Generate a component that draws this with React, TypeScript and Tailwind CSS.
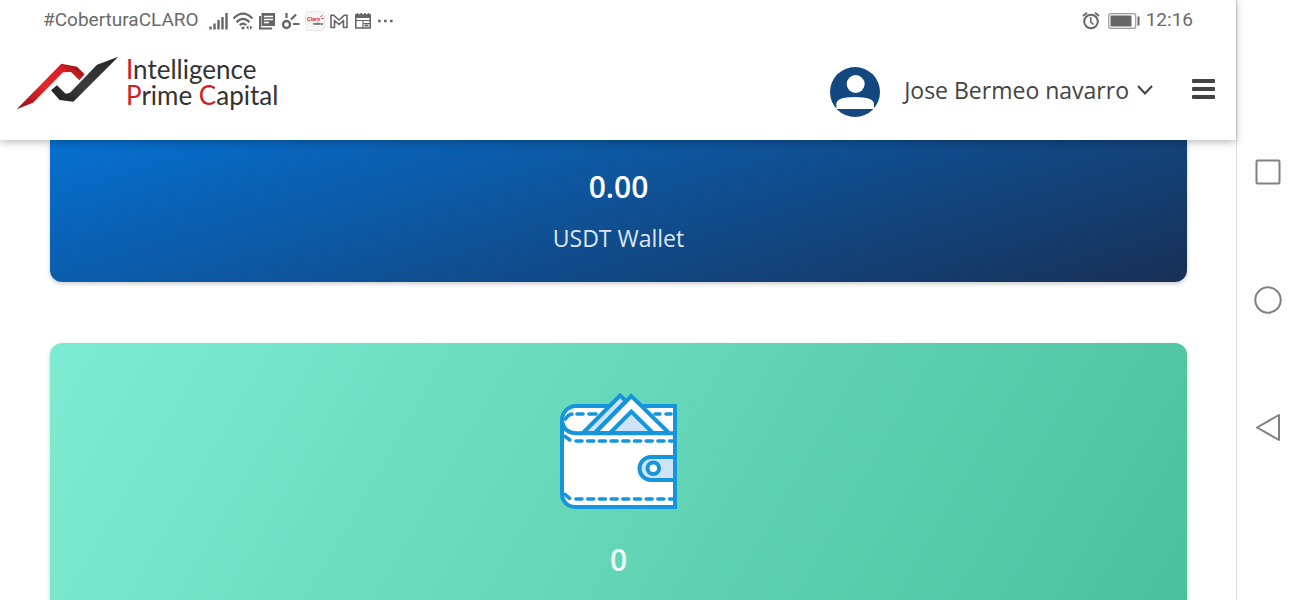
import type { ReactNode } from "react";

function StatusIcon({ children }: { children: ReactNode }) {
  return (
    <svg viewBox="0 0 20 20" className="size-5" fill="none" stroke="#666" strokeWidth="2" aria-hidden="true">
      {children}
    </svg>
  );
}

function StatusBar() {
  return (
    <div className="flex h-10 items-center justify-between pl-[43px] pr-[43px] pt-px font-['Roboto',sans-serif] text-[19px] text-[#6a6a6a]">
      <div className="flex items-center">
        <span>#CoberturaCLARO</span>
        <div className="ml-2.5 flex items-center gap-1">
          <StatusIcon>
            <path d="M1.500 15.500v3M5.500 12.500v6M9.500 9v9.500M13.500 6v12.500M17.500 2v16.500" strokeWidth="2.400" />
          </StatusIcon>
          <StatusIcon>
            <path d="M.5 7.500Q10-2 19.500 7.500M3.500 11.200Q10 4.500 16.500 11.200M6.800 14.300Q10 11 13.200 14.300" strokeWidth="2.200" />
            <circle cx="10" cy="17" r="1.600" fill="#666" stroke="none" />
            <path d="M15.500 14.500v4L13 16.500zM17 14.500v4l2.500-2z" fill="#666" stroke="none" />
          </StatusIcon>
          <StatusIcon>
            <path d="M3 5v12.500h12" />
            <path d="M4.500 2h13.500v13H4.500z" fill="#666" stroke="none" />
            <path d="M7 5.500h9M7 8.500h9M7 11.500h5" stroke="#fff" strokeWidth="1.400" />
          </StatusIcon>
          <StatusIcon>
            <circle cx="5.500" cy="13.500" r="3.500" strokeWidth="2.400" />
            <path d="M5.500 2v5M10 8.500l5-5M12 13h6.500" strokeWidth="2.200" />
          </StatusIcon>
          <svg viewBox="0 0 20 20" className="size-5" aria-hidden="true">
            <rect x=".5" y=".5" width="19" height="19" rx="4" fill="#f8f7f7" stroke="#e7e5e5" />
            <text x="2" y="10" fontSize="5.500" fontWeight="700" fontFamily="Roboto" fill="#d8302f">Claro</text>
            <path d="M15.500 6l2-2M16.500 7.500h2" stroke="#d8302f" />
            <text x="8" y="14" fontSize="4" fontWeight="700" fontFamily="Roboto" fill="#333">video</text>
          </svg>
          <StatusIcon>
            <path d="M2 16.500V4.200h2.500L10 9l5.500-4.800H18v12.300h-3.500V9.500L10 13.500 5.500 9.500v7z" strokeWidth="1.600" strokeLinejoin="round" />
          </StatusIcon>
          <StatusIcon>
            <path d="M2.800 4h14.400v13H2.800z" strokeWidth="1.600" />
            <path d="M2 3.500h16v3.500H2z" fill="#666" stroke="none" />
            <path d="M4.500 2v2M8.200 2v2M11.800 2v2M15.500 2v2" strokeWidth="1.500" />
            <path d="M3 9.500h14M10.500 12.500H17" strokeWidth="1" />
            <path d="M10 9.500v7.500" strokeWidth="1.200" />
            <path d="M11.500 13.500h4v2h-4z" fill="#666" stroke="none" />
          </StatusIcon>
          <StatusIcon>
            <path d="M1 10h2.600M7 10h2.600M13 10h2.600" strokeWidth="2.500" />
          </StatusIcon>
        </div>
      </div>
      <div className="flex items-center">
        <StatusIcon>
          <circle cx="10" cy="10.500" r="6.800" strokeWidth="2" />
          <path d="M9.700 6v5l3 2.500" strokeWidth="1.600" />
          <path d="M2 5l4-3.300M18 5l-4-3.300" strokeWidth="1.800" />
        </StatusIcon>
        <svg viewBox="0 0 32 16" className="ml-[7px] mr-[6px] h-4 w-8" fill="#666" aria-hidden="true">
          <rect x=".7" y=".7" width="27" height="14.600" rx="2" fill="none" stroke="#999" strokeWidth="1.200" />
          <path d="M2.500 2.500h21v11h-21zM29.500 3.500h2v9h-2z" />
        </svg>
        <span>12:16</span>
      </div>
    </div>
  );
}

function Logo() {
  return (
    <a href="#" className="flex items-center gap-[7px] pb-4">
      <svg viewBox="50 46 309 165" className="h-[55px] w-[103px]" aria-hidden="true">
        <defs>
          <linearGradient id="logo-red" x1="0" y1="1" x2="1" y2="0">
            <stop offset="0" stopColor="#8f1215" />
            <stop offset=".45" stopColor="#e6262a" />
            <stop offset=".75" stopColor="#dc1f24" />
            <stop offset="1" stopColor="#7c1013" />
          </linearGradient>
          <linearGradient id="logo-dark" x1="0" y1="1" x2="1" y2="0">
            <stop offset="0" stopColor="#1c1c1c" />
            <stop offset=".4" stopColor="#3c3d3f" />
            <stop offset="1" stopColor="#242424" />
          </linearGradient>
        </defs>
        <path d="M52 209 186 72 233 81 256 104 240 122 215 97 191 98 101 189z" fill="url(#logo-red)" />
        <path d="M357 51 222 186 181 181 155 152 173 137 199 162 212 159 293 75z" fill="url(#logo-dark)" />
      </svg>
      <span className="font-['Lato',sans-serif] text-[26px] leading-[26px] text-[#333]">
        <span className="text-[#d01c22]">I</span>ntelligence
        <br />
        <span className="text-[#d01c22]">P</span>rime <span className="text-[#d01c22]">C</span>apital
      </span>
    </a>
  );
}

function Header() {
  return (
    <header className="relative z-10 shrink-0 bg-white shadow-[0_2px_8px_rgba(0,0,0,0.28)]">
      <StatusBar />
      <div className="flex h-[100px] items-center justify-between pl-4 pr-5">
        <Logo />
        <div className="flex items-center gap-[39px]">
          <button type="button" className="flex items-center text-[23px] text-[#444]">
            <svg viewBox="0 0 150 150" className="mr-6 mt-1 size-[50px]" aria-hidden="true">
              <circle cx="75" cy="75" r="75" fill="#12487f" />
              <circle cx="77" cy="51" r="27" fill="#fff" />
              <path d="M19 126V111Q19 90 75 90T132 111V126z" fill="#fff" />
            </svg>
            Jose Bermeo navarro
            <svg viewBox="0 0 16 16" className="ml-2 size-4" fill="none" stroke="#444" strokeWidth="2" aria-hidden="true">
              <path d="M1 4 8 11.500l7-7.500" />
            </svg>
          </button>
          <button type="button" aria-label="Menu">
            <svg viewBox="0 0 24 24" className="mb-1 size-6" fill="#444" aria-hidden="true">
              <rect y="3" width="23" height="4" rx="1" />
              <rect y="11" width="23" height="4" rx="1" />
              <rect y="19" width="23" height="4" rx="1" />
            </svg>
          </button>
        </div>
      </div>
    </header>
  );
}

function WalletIcon() {
  return (
    <svg viewBox="0 0 117 117" className="mb-[30px] size-[117px]" fill="none" stroke="#1495dc" strokeWidth="4" aria-hidden="true">
      <path d="M115 13H16A14 14 0 0 0 2 27V101A13 13 0 0 0 15 114H115z" fill="#fff" />
      <path d="M2 27Q3 40 17 40.300H115" />
      <g strokeWidth="3.600" strokeLinecap="round">
        <path d="M5.500 26Q8 21.500 12 21M17 21h6M29 21h7M95 21h5M106 21h5" />
        <path d="M5 43.500 10.500 47.500M16 48h97M5 101.500 10.500 106M16 106h97" strokeDasharray="6 5.700" />
      </g>
      <path d="M23 40 60 2.500 66 8 35 40z" fill="#cfe3f8" />
      <path d="M35 40 71.300 3 109 40z" fill="#fff" />
      <path d="M50 40 71.300 18.500 93 40z" fill="#cfe3f8" />
      <path d="M115 64H91A11.500 11.500 0 0 0 91 87H115z" fill="#cfe3f8" />
      <circle cx="93.300" cy="75.300" r="5.800" fill="#fff" />
    </svg>
  );
}

function NavRail() {
  return (
    <nav className="flex w-16 shrink-0 flex-col items-center justify-center gap-[100px] border-l border-[#dcdcdc] bg-white pr-px">
      <button type="button" aria-label="Recent apps">
        <svg viewBox="0 0 28 28" className="size-7" fill="none" stroke="#808080" strokeWidth="2">
          <rect x="2.500" y="2.500" width="23" height="23" rx="1" />
        </svg>
      </button>
      <button type="button" aria-label="Home">
        <svg viewBox="0 0 28 28" className="size-7" fill="none" stroke="#808080" strokeWidth="2">
          <circle cx="14" cy="14" r="12.700" />
        </svg>
      </button>
      <button type="button" aria-label="Back">
        <svg viewBox="0 0 28 28" className="size-7" fill="none" stroke="#808080" strokeWidth="2" strokeLinejoin="round">
          <path d="M25 1V26L3 13.500z" />
        </svg>
      </button>
    </nav>
  );
}

export default function App() {
  return (
    <div className="flex h-screen overflow-hidden bg-white font-['Open_Sans',sans-serif]">
      <div className="flex min-w-0 flex-1 flex-col">
        <Header />
        <main className="flex min-h-0 flex-1 flex-col gap-[61px] overflow-hidden pl-[50px] pr-[49px] text-center">
          <section className="shrink-0 rounded-b-xl bg-[linear-gradient(163deg,#0670d0,#183056)] pb-7 pt-[27px] shadow-[0_2px_4px_rgba(0,0,0,0.2)]">
            <p className="text-3xl leading-10 font-semibold text-white">0.00</p>
            <h2 className="mt-[15px] text-[23px] leading-8 text-[#dce7f3]">USDT Wallet</h2>
          </section>
          <section className="flex shrink-0 flex-col items-center rounded-t-xl bg-[linear-gradient(120deg,#7eecd2,#4cc19d)] pb-7 pt-[50px] shadow-[0_2px_4px_rgba(0,0,0,0.2)]">
            <WalletIcon />
            <p className="text-3xl leading-10 font-semibold text-[#effcf8]">0</p>
          </section>
        </main>
      </div>
      <NavRail />
    </div>
  );
}
